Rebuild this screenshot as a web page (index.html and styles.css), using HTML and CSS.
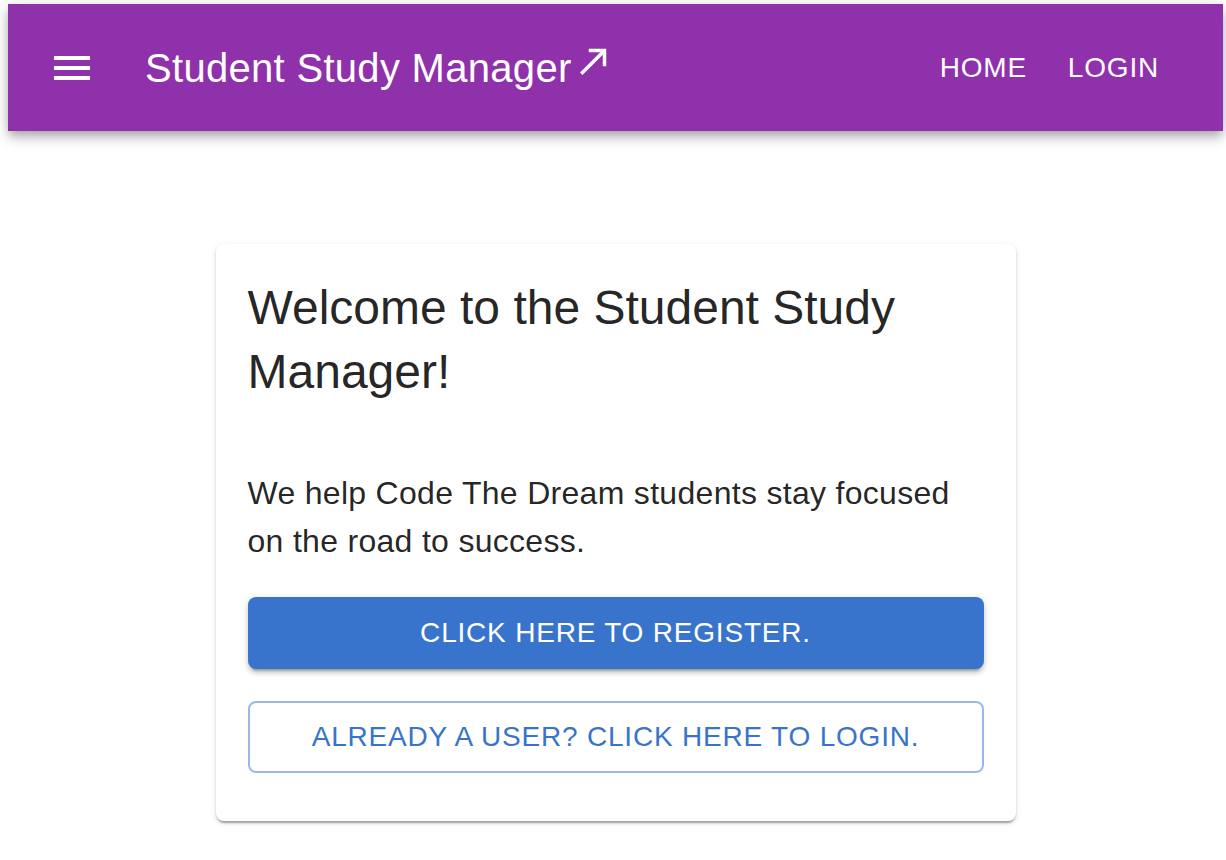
FILE: index.html
```html
<!DOCTYPE html>
<html lang="en">
<head>
<meta charset="utf-8">
<title>Student Study Manager</title>
<link rel="stylesheet" href="styles.css">
</head>
<body>
<div class="page">
  <header class="appbar">
    <button class="menu-btn" aria-label="menu">
      <svg class="menu-icon" viewBox="0 0 24 24" width="48" height="48"><path fill="#fff" d="M3 18h18v-2H3zm0-5h18v-2H3zm0-7v2h18V6z"/></svg>
    </button>
    <div class="title">
      <span>Student Study Manager</span>
      <svg class="title-icon" viewBox="0 0 24 24" width="42" height="42"><path fill="#fff" d="M9 5v2h6.59L4 18.59 5.41 20 17 8.41V15h2V5z"/></svg>
    </div>
    <nav class="nav">
      <a class="nav-btn" href="#">Home</a>
      <a class="nav-btn" href="#">Login</a>
    </nav>
  </header>
  <main class="main">
    <section class="card">
      <h1 class="card-title">Welcome to the Student Study Manager!</h1>
      <p class="card-text">We help Code The Dream students stay focused on the road to success.</p>
      <div class="actions">
        <a class="btn btn-contained" href="#">Click here to register.</a>
        <a class="btn btn-outlined" href="#">Already a user? Click here to login.</a>
      </div>
    </section>
  </main>
</div>
</body>
</html>
```

FILE: styles.css
```css
* { box-sizing: border-box; }
html, body { margin: 0; padding: 0; background: #fff; }
body {
  font-family: "Liberation Sans", Arial, Helvetica, sans-serif;
  color: rgba(0,0,0,0.87);
}
.page {
  padding: 4px 3px 0 8px;
}
.appbar {
  height: 127px;
  background: #8f31aa;
  color: #fff;
  display: flex;
  align-items: center;
  padding: 0 48px 0 40px;
  box-shadow: 0 4px 8px -2px rgba(0,0,0,0.2), 0 8px 10px 0 rgba(0,0,0,0.14), 0 2px 20px 0 rgba(0,0,0,0.12);
}
.menu-btn {
  background: none;
  border: 0;
  padding: 0;
  margin: 0 49px 0 0;
  width: 48px;
  height: 48px;
  display: flex;
  cursor: pointer;
}
.menu-icon { display: block; }
.title {
  display: flex;
  align-items: baseline;
  font-size: 40px;
  line-height: 64px;
  letter-spacing: 0.0075em;
  flex: 1;
}
.title-icon {
  display: block;
  margin-left: 1px;
  margin-bottom: 4px;
}
.nav {
  display: flex;
  gap: 9px;
}
.nav-btn {
  color: #fff;
  text-decoration: none;
  text-transform: uppercase;
  font-size: 28px;
  line-height: 49px;
  letter-spacing: 0.02857em;
  padding: 12px 16px;
}
.main {
  padding-top: 113px;
  padding-bottom: 40px;
}
.card {
  width: 800px;
  margin: 0 auto;
  background: #fff;
  border-radius: 8px;
  padding: 32px 32px 48px;
  box-shadow: 0 4px 2px -2px rgba(0,0,0,0.2), 0 2px 2px 0 rgba(0,0,0,0.14), 0 2px 6px 0 rgba(0,0,0,0.12);
}
.card-title {
  margin: 0 0 65px;
  font-weight: 400;
  font-size: 48px;
  line-height: 64px;
  color: rgba(0,0,0,0.87);
}
.card-text {
  margin: 0 0 32px;
  font-size: 32px;
  line-height: 48px;
  letter-spacing: 0.00938em;
}
.actions {
  display: flex;
  flex-direction: column;
  gap: 32px;
}
.btn {
  display: block;
  text-align: center;
  text-decoration: none;
  text-transform: uppercase;
  font-size: 28px;
  line-height: 48px;
  letter-spacing: 0.02857em;
  border-radius: 8px;
}
.btn-contained {
  background: #3874cb;
  color: #fff;
  padding: 12px 32px;
  box-shadow: 0 6px 2px -4px rgba(0,0,0,0.2), 0 4px 4px 0 rgba(0,0,0,0.14), 0 2px 10px 0 rgba(0,0,0,0.12);
}
.btn-outlined {
  color: #3874cb;
  border: 2px solid #9db9e3;
  padding: 10px 30px;
}
```
